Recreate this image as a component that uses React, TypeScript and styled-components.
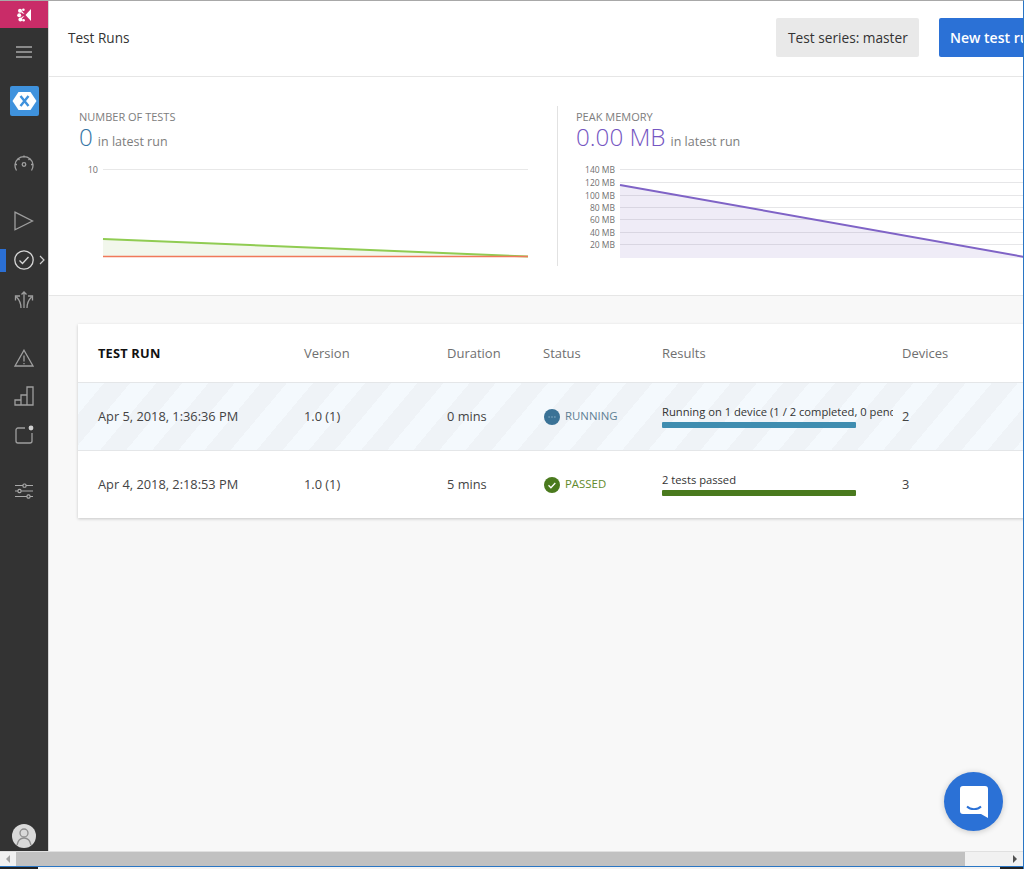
import React from "react";
import styled, { createGlobalStyle } from "styled-components";

const Global = createGlobalStyle`
  html, body { margin: 0; padding: 0; height: 100%; overflow: hidden; background: #f8f8f8; }
  #root { height: 100%; }
  * { box-sizing: border-box; }
`;

const Page = styled.div`
  width: 1024px;
  height: 869px;
  display: flex;
  flex-direction: column;
  overflow: hidden;
  position: relative;
  font-family: "Open Sans", "Noto Sans", sans-serif;
  color: #333;
  border-top: 1px solid #a8a8a8;
  border-right: 1px solid #2a76c4;
`;

const Viewport = styled.div`
  flex: 1;
  display: flex;
  min-height: 0;
`;

const Sidebar = styled.nav`
  width: 49px;
  flex: none;
  background: #333333;
  border-right: 1px solid #d4d4d4;
  display: flex;
  flex-direction: column;
  align-items: stretch;
`;

const Brand = styled.div`
  height: 27px;
  background: #c92c68;
  display: flex;
  align-items: center;
  justify-content: center;
`;

const NavItem = styled.div<{ $gap: number }>`
  position: relative;
  height: 38px;
  margin-top: ${(p) => p.$gap}px;
  display: flex;
  align-items: center;
  justify-content: center;
`;

const ActiveMark = styled.span`
  position: absolute;
  left: 0;
  top: 8px;
  width: 6px;
  height: 23px;
  background: #2b6fd4;
`;

const ActiveChevron = styled.svg`
  position: absolute;
  left: 39px;
  top: 14px;
`;

const AvatarItem = styled.div`
  margin-top: auto;
  height: 30px;
  display: flex;
  align-items: center;
  justify-content: center;
`;

const Main = styled.main`
  flex: 1;
  min-width: 0;
  display: flex;
  flex-direction: column;
  background: #f8f8f8;
  overflow: hidden;
`;

const Header = styled.header`
  height: 76px;
  flex: none;
  background: #fff;
  display: flex;
  align-items: center;
  padding: 0 0 2px 19px;
  border-bottom: 1px solid #e6e6e6;
`;

const Title = styled.h1`
  margin: 0 auto 0 0;
  font-size: 13.6px;
  font-weight: 400;
  color: #333;
`;

const Button = styled.div<{ $primary?: boolean }>`
  height: 39px;
  flex: none;
  display: flex;
  align-items: center;
  padding: 0 ${(p) => (p.$primary ? "11px" : "12px")};
  border-radius: 2px;
  font-size: ${(p) => (p.$primary ? "14px" : "13.7px")};
  white-space: nowrap;
  background: ${(p) => (p.$primary ? "#2b71d6" : "#e9e9e9")};
  color: ${(p) => (p.$primary ? "#fff" : "#333")};
  font-weight: ${(p) => (p.$primary ? 600 : 400)};
  margin-left: ${(p) => (p.$primary ? "20px" : "0")};
  margin-right: ${(p) => (p.$primary ? "-31px" : "0")};
  width: ${(p) => (p.$primary ? "115px" : "143px")};
`;

const Charts = styled.section`
  height: 219px;
  flex: none;
  background: #fff;
  border-bottom: 1px solid #e6e6e6;
  display: flex;
  padding: 29px 0 0 30px;
`;

const ChartPanel = styled.div<{ $divided?: boolean; $width: number }>`
  width: ${(p) => p.$width}px;
  flex: none;
  height: 160px;
  ${(p) => (p.$divided ? "border-left: 1px solid #e2e2e2; padding-left: 18px;" : "")}
`;

const ChartLabel = styled.div`
  font-size: 11px;
  line-height: 14px;
  height: 14px;
  margin-top: 4px;
  color: #7d7d7d;
  white-space: nowrap;
`;

const Metric = styled.div`
  display: flex;
  align-items: baseline;
  gap: 5px;
  height: 26px;
  line-height: 26px;
  white-space: nowrap;
`;

const MetricValue = styled.span<{ $color: string }>`
  font-size: 24.2px;
  font-weight: 300;
  color: ${(p) => p.$color};
`;

const MetricNote = styled.span`
  font-size: 12.5px;
  color: #7d7d7d;
`;

const ChartSvg = styled.svg`
  display: block;
  margin-top: 11px;
  font-family: "Open Sans", "Noto Sans", sans-serif;
`;

const Card = styled.section`
  width: 1000px;
  flex: none;
  margin: 28px 0 0 29px;
  background: #fff;
  box-shadow: 0 1px 3px rgba(0, 0, 0, 0.2);
`;

const Row = styled.div<{ $head?: boolean; $running?: boolean }>`
  display: grid;
  grid-template-columns: 206px 143px 96px 119px 240px 1fr;
  align-items: center;
  padding-left: 20px;
  height: ${(p) => (p.$head ? "59px" : "68px")};
  border-bottom: 1px solid #e4e6e8;
  &:last-child { border-bottom: 0; height: 67px; }
  background: ${(p) =>
    p.$running
      ? "repeating-linear-gradient(130deg, #f4f9fd 0 20px, #eff3f7 20px 40px)"
      : "#fff"};
`;

const HeadCell = styled.div<{ $strong?: boolean }>`
  font-size: ${(p) => (p.$strong ? "12.8px" : "13px")};
  font-weight: ${(p) => (p.$strong ? 700 : 400)};
  color: ${(p) => (p.$strong ? "#111" : "#6f6f6f")};
  letter-spacing: ${(p) => (p.$strong ? "0.2px" : "0")};
`;

const Cell = styled.div`
  font-size: 12.8px;
  color: #444;
  white-space: nowrap;
  padding-bottom: 2px;
`;

const StatusCell = styled.div<{ $color: string }>`
  display: flex;
  align-items: center;
  gap: 5px;
  font-size: 11.4px;
  color: ${(p) => p.$color};
  padding-left: 1px;
`;

const StatusText = styled.span`
  padding-bottom: 2px;
`;

const ResultCell = styled.div`
  width: 231px;
  overflow: hidden;
  padding-bottom: 2px;
`;

const ResultText = styled.div`
  font-size: 11.2px;
  line-height: 15px;
  color: #333;
  white-space: nowrap;
`;

const ProgressBar = styled.div<{ $color: string }>`
  width: 194px;
  height: 6px;
  margin-top: 3px;
  border-radius: 1px;
  background: ${(p) => p.$color};
`;

const ChatButton = styled.div`
  position: absolute;
  left: 944px;
  top: 771px;
  width: 59px;
  height: 59px;
  border-radius: 50%;
  background: #2b71d6;
  box-shadow: 0 1px 6px rgba(0, 0, 0, 0.2);
  display: flex;
  align-items: center;
  justify-content: center;
`;

const Scrollbar = styled.div`
  height: 15px;
  flex: none;
  background: #f1f1f1;
  display: flex;
  align-items: stretch;
  border-top: 1px solid #e0e0e0;
`;

const ScrollArrow = styled.div<{ $dir: "left" | "right" }>`
  width: 16px;
  flex: none;
  display: flex;
  align-items: center;
  justify-content: center;
  &::before {
    content: "";
    border-top: 4px solid transparent;
    border-bottom: 4px solid transparent;
    ${(p) =>
      p.$dir === "left"
        ? "border-right: 4px solid #a3a3a3;"
        : "border-left: 4px solid #505050;"}
  }
`;

const ScrollThumb = styled.div`
  width: 949px;
  flex: none;
  background: #c1c1c1;
`;

const ScrollGap = styled.div`
  flex: 1;
`;

const DesktopStrip = styled.div`
  height: 3px;
  flex: none;
  border-top: 1px solid #2a76c4;
  background: linear-gradient(to right, #222 0 38px, #f4f4f4 38px 1000px, #222 1000px);
`;

const stroke = { fill: "none", stroke: "#9f9f9f", strokeWidth: 1.3 };

const Logo = () => (
  <svg width="14" height="14" viewBox="0 0 14 14" fill="#fff">
    <circle cx="3" cy="2.8" r="2" />
    <circle cx="2.2" cy="7.3" r="2" />
    <circle cx="3.4" cy="11.4" r="2" />
    <path d="M4.5 2.5L7.5 6 4.5 5zM4.5 9l3-1-3 3z" />
    <path d="M8.5 7L14 1v12z" />
    <circle cx="6.4" cy="1.7" r="1.3" />
    <circle cx="6.6" cy="12.2" r="1.3" />
  </svg>
);

const Menu = () => (
  <svg width="16" height="12" viewBox="0 0 16 12" stroke="#e2e2e2" strokeWidth="1.2">
    <path d="M0 1h16M0 6h16M0 11h16" />
  </svg>
);

const Xamarin = () => (
  <svg width="29" height="30" viewBox="0 0 29 30">
    <rect width="29" height="30" rx="2" fill="#3f92dd" />
    <path d="M8.5 6h12l6 9-6 9h-12l-6-9z" fill="#fff" />
    <path d="M10.5 10l8 10M18.5 10l-8 10" stroke="#3f92dd" strokeWidth="2.4" />
  </svg>
);

const Gauge = () => (
  <svg width="20" height="18" viewBox="0 0 20 18" {...stroke}>
    <path d="M2.5 16.5A9 9 0 1 1 17.5 16.5" />
    <circle cx="10" cy="10.5" r="1.8" />
    <path d="M10 1.5v2M4 4.5l1.5 1.5M16 4.5L14.5 6M1 10.5h2M19 10.5h-2" />
  </svg>
);

const Play = () => (
  <svg width="20" height="20" viewBox="0 0 20 20" {...stroke}>
    <path d="M1 1.2L18.5 10 1 18.8z" />
  </svg>
);

const CheckCircle = () => (
  <svg width="20" height="20" viewBox="0 0 20 20" fill="none" stroke="#d6d6d6" strokeWidth="1.3">
    <circle cx="10" cy="10" r="9.2" />
    <path d="M5.5 10.5l3 3 6-6.5" />
  </svg>
);

const Split = () => (
  <svg width="20" height="20" viewBox="0 0 20 20" {...stroke}>
    <path d="M10 18V2M7.5 4.5L10 2l2.5 2.5" />
    <path d="M7 18C7 13 5.5 10 2.5 7M1.5 10.5V6h4.5" />
    <path d="M13 18c0-5 1.5-8 4.5-11M18.5 10.5V6H14" />
  </svg>
);

const Warning = () => (
  <svg width="20" height="18" viewBox="0 0 20 18" {...stroke}>
    <path d="M10 1.2L19 17H1z" />
    <path d="M10 6.5v6M10 14v1.3" />
  </svg>
);

const Bars = () => (
  <svg width="20" height="20" viewBox="0 0 20 20" {...stroke}>
    <path d="M1 19v-5h6v5zM7 19V9h6v10zM13 19V1h6v18z" />
  </svg>
);

const SquareDot = () => (
  <svg width="20" height="20" viewBox="0 0 20 20">
    <path d="M11 3H4a2 2 0 0 0-2 2v11a2 2 0 0 0 2 2h12a2 2 0 0 0 2-2V8" {...stroke} />
    <circle cx="17" cy="3" r="2.4" fill="#cfcfcf" />
  </svg>
);

const Sliders = () => (
  <svg width="20" height="16" viewBox="0 0 20 16" fill="#333" stroke="#a9a9a9" strokeWidth="1.1">
    <path d="M1 2.5h18M1 8h18M1 13.5h18" />
    <rect x="9" y="1" width="3" height="3.2" rx="1" />
    <rect x="4" y="6.4" width="3" height="3.2" rx="1" />
    <rect x="13" y="11.9" width="3" height="3.2" rx="1" />
  </svg>
);

const Avatar = () => (
  <svg width="24" height="24" viewBox="0 0 24 24">
    <circle cx="12" cy="12" r="12" fill="#d9d9d9" />
    <circle cx="12" cy="9" r="4" fill="none" stroke="#8d8d8d" strokeWidth="1.3" />
    <path d="M5 21c1-5 4-7 7-7s6 2 7 7" fill="none" stroke="#8d8d8d" strokeWidth="1.3" />
  </svg>
);

const RunningIcon = () => (
  <svg width="16" height="16" viewBox="0 0 16 16">
    <circle cx="8" cy="8" r="8" fill="#3a7296" />
    <path d="M4.6 8h1M7.5 8h1M10.4 8h1" stroke="#b9d5e6" strokeWidth="1.1" />
  </svg>
);

const PassedIcon = () => (
  <svg width="16" height="16" viewBox="0 0 16 16">
    <circle cx="8" cy="8" r="8" fill="#4a7a1e" />
    <path d="M4.5 8.3l2.4 2.4 4.4-4.7" fill="none" stroke="#fff" strokeWidth="1.3" />
  </svg>
);

const ChatIcon = () => (
  <svg width="28" height="32" viewBox="0 0 28 32">
    <path d="M3 0h22a3 3 0 0 1 3 3v29l-7-4H3a3 3 0 0 1-3-3V3a3 3 0 0 1 3-3z" fill="#fff" />
    <path d="M7 20.5c3.5 3.6 10.5 3.6 14 0" fill="none" stroke="#2b71d6" strokeWidth="1.8" />
  </svg>
);

const TestsChart = () => (
  <ChartSvg width="452" height="100" viewBox="0 0 452 100">
    <line x1="24" x2="449" y1="8.5" y2="8.5" stroke="#e8e8e8" strokeWidth="1.2" />
    <text x="19" y="12" fontSize="9" fill="#6f6f6f" textAnchor="end">10</text>
    <path d="M24 78L449 95.5H24z" fill="#f2f7ec" />
    <path d="M24 78L449 95.5" stroke="#90cc52" strokeWidth="2" fill="none" />
    <path d="M24 95.5H449" stroke="#f0795a" strokeWidth="1.4" fill="none" />
  </ChartSvg>
);

const memoryGrid = [
  { y: 8.5, label: "140 MB" },
  { y: 21.5, label: "120 MB" },
  { y: 34.5, label: "100 MB" },
  { y: 46.5, label: "80 MB" },
  { y: 58.5, label: "60 MB" },
  { y: 71.5, label: "40 MB" },
  { y: 83.5, label: "20 MB" },
];

const MemoryChart = () => (
  <ChartSvg width="449" height="100" viewBox="0 0 449 100">
    {memoryGrid.map((g) => (
      <g key={g.label}>
        <line x1="44" x2="449" y1={g.y} y2={g.y} stroke="#e6e6e8" strokeWidth="1.2" />
        <text x="39" y={g.y + 3.5} fontSize="8.5" fill="#6f6f6f" textAnchor="end">{g.label}</text>
      </g>
    ))}
    <path d="M44 24L449 96V97H44z" fill="#7a5fc0" fillOpacity="0.12" />
    <path d="M44 24L449 96" stroke="#7f63c6" strokeWidth="2" fill="none" />
  </ChartSvg>
);

export default function App() {
  return (
    <Page>
      <Global />
      <Viewport>
        <Sidebar>
          <Brand><Logo /></Brand>
          <NavItem $gap={5}><Menu /></NavItem>
          <NavItem $gap={11}><Xamarin /></NavItem>
          <NavItem $gap={24}><Gauge /></NavItem>
          <NavItem $gap={20}><Play /></NavItem>
          <NavItem $gap={1}>
            <ActiveMark />
            <CheckCircle />
            <ActiveChevron width="6" height="10" viewBox="0 0 6 10" fill="none" stroke="#cfcfcf" strokeWidth="1.2">
              <path d="M1 1l4 4-4 4" />
            </ActiveChevron>
          </NavItem>
          <NavItem $gap={2}><Split /></NavItem>
          <NavItem $gap={20}><Warning /></NavItem>
          <NavItem $gap={0}><Bars /></NavItem>
          <NavItem $gap={1}><SquareDot /></NavItem>
          <NavItem $gap={18}><Sliders /></NavItem>
          <AvatarItem><Avatar /></AvatarItem>
        </Sidebar>
        <Main>
          <Header>
            <Title>Test Runs</Title>
            <Button>Test series: master</Button>
            <Button $primary>New test run</Button>
          </Header>
          <Charts>
            <ChartPanel $width={478}>
              <ChartLabel>NUMBER OF TESTS</ChartLabel>
              <Metric>
                <MetricValue $color="#3574a4">0</MetricValue>
                <MetricNote>in latest run</MetricNote>
              </Metric>
              <TestsChart />
            </ChartPanel>
            <ChartPanel $divided $width={480}>
              <ChartLabel>PEAK MEMORY</ChartLabel>
              <Metric>
                <MetricValue $color="#7556c2">0.00 MB</MetricValue>
                <MetricNote>in latest run</MetricNote>
              </Metric>
              <MemoryChart />
            </ChartPanel>
          </Charts>
          <Card>
            <Row $head>
              <HeadCell $strong>TEST RUN</HeadCell>
              <HeadCell>Version</HeadCell>
              <HeadCell>Duration</HeadCell>
              <HeadCell>Status</HeadCell>
              <HeadCell>Results</HeadCell>
              <HeadCell>Devices</HeadCell>
            </Row>
            <Row $running>
              <Cell>Apr 5, 2018, 1:36:36 PM</Cell>
              <Cell>1.0 (1)</Cell>
              <Cell>0 mins</Cell>
              <StatusCell $color="#5f7f94"><RunningIcon /><StatusText>RUNNING</StatusText></StatusCell>
              <ResultCell>
                <ResultText>Running on 1 device (1 / 2 completed, 0 pending)</ResultText>
                <ProgressBar $color="#3f8db0" />
              </ResultCell>
              <Cell>2</Cell>
            </Row>
            <Row>
              <Cell>Apr 4, 2018, 2:18:53 PM</Cell>
              <Cell>1.0 (1)</Cell>
              <Cell>5 mins</Cell>
              <StatusCell $color="#5f8a2c"><PassedIcon /><StatusText>PASSED</StatusText></StatusCell>
              <ResultCell>
                <ResultText>2 tests passed</ResultText>
                <ProgressBar $color="#4a7a1e" />
              </ResultCell>
              <Cell>3</Cell>
            </Row>
          </Card>
        </Main>
      </Viewport>
      <Scrollbar>
        <ScrollArrow $dir="left" />
        <ScrollThumb />
        <ScrollGap />
        <ScrollArrow $dir="right" />
      </Scrollbar>
      <DesktopStrip />
      <ChatButton><ChatIcon /></ChatButton>
    </Page>
  );
}
